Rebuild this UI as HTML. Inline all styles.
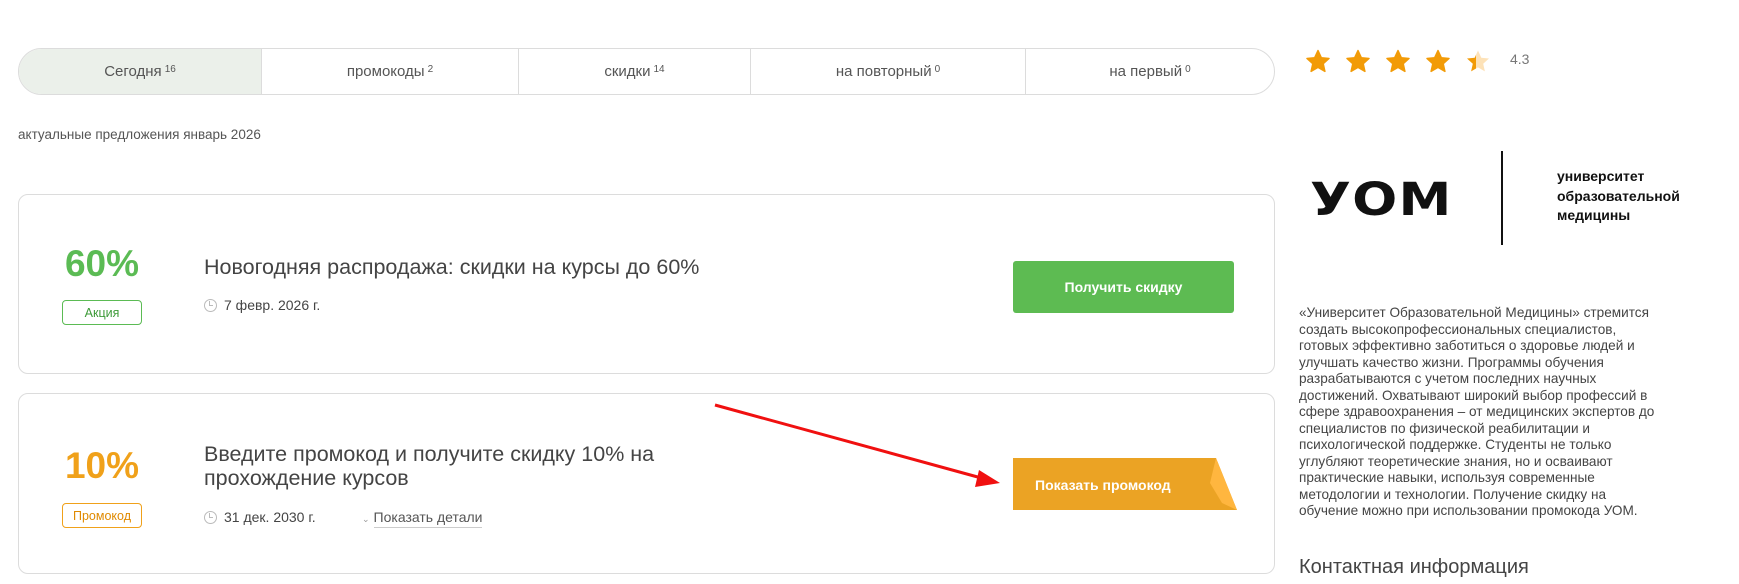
<!DOCTYPE html>
<html><head><meta charset="utf-8"><style>
*{margin:0;padding:0;box-sizing:border-box}
body{width:1739px;height:584px;overflow:hidden;background:#fff;font-family:"Liberation Sans",sans-serif;color:#444;position:relative}
.a{position:absolute}
.tabs{left:18px;top:48px;width:1257px;height:47px;border:1px solid #dcdcdc;border-radius:24px;overflow:hidden;display:flex}
.tabs div{height:100%;display:flex;align-items:center;justify-content:center;font-size:15px;color:#555;border-right:1px solid #dcdcdc}
.tabs div:last-child{border-right:none}
.tabs sup{font-size:10px;margin-left:3px;position:relative;top:-2px}
.card{left:18px;width:1257px;border:1px solid #dcdcdc;border-radius:10px}
.pct{font-size:37px;font-weight:bold;width:120px;text-align:center}
.badge{font-size:12.5px;border:1px solid;border-radius:4px;width:80px;height:25px;display:flex;align-items:center;justify-content:center}
.title{font-size:21.5px;color:#444;line-height:28px}
.date{font-size:14px;color:#444;display:flex;align-items:center}
.clock{width:13px;height:13px;border:1.5px solid #bbb;border-radius:50%;margin-right:7px;position:relative}
.clock:after{content:"";position:absolute;left:4px;top:1px;width:3px;height:4px;border-left:1.5px solid #bbb;border-bottom:1.5px solid #bbb}
.btn{color:#fff;font-weight:bold;font-size:14px;display:flex;align-items:center;justify-content:center;border-radius:3px}
</style></head><body>
<div class="a tabs">
<div style="width:243px;background:#ebf0ea">Сегодня<sup>16</sup></div>
<div style="width:257px">промокоды<sup>2</sup></div>
<div style="width:232px">скидки<sup>14</sup></div>
<div style="width:275px">на повторный<sup>0</sup></div>
<div style="flex:1">на первый<sup>0</sup></div>
</div>
<div class="a" style="left:18px;top:127px;font-size:13.5px;color:#555">актуальные предложения январь 2026</div>

<div class="a card" style="top:194px;height:180px"></div>
<div class="a pct" style="left:42px;top:243px;color:#5bbb54">60%</div>
<div class="a badge" style="left:62px;top:300px;border-color:#5bbb54;color:#3d9a38">Акция</div>
<div class="a title" style="left:204px;top:253px">Новогодняя распродажа: скидки на курсы до 60%</div>
<div class="a date" style="left:204px;top:297px"><span class="clock"></span>7 февр. 2026 г.</div>
<div class="a btn" style="left:1013px;top:261px;width:221px;height:52px;background:#5dbb52">Получить скидку</div>

<div class="a card" style="top:393px;height:181px"></div>
<div class="a pct" style="left:42px;top:445px;color:#f0a11a">10%</div>
<div class="a badge" style="left:62px;top:503px;border-color:#f0a11a;color:#e08a00">Промокод</div>
<div class="a title" style="left:204px;top:442px;line-height:24px">Введите промокод и получите скидку 10% на<br>прохождение курсов</div>
<div class="a date" style="left:204px;top:509px"><span class="clock"></span>31 дек. 2030 г.</div>
<div class="a" style="left:362px;top:509px;font-size:14px;color:#555"><span style="font-size:9px;color:#999;margin-right:4px">&#8964;</span><span style="border-bottom:1px solid #ccc;padding-bottom:2px">Показать детали</span></div>
<svg class="a" style="left:1010px;top:455px" width="232" height="60">
<polygon points="3,3 206,3 227,55 3,55" fill="#eba324"/>
<polygon points="206,3 227,55 212,48 200,28" fill="#ffb63f"/>
<text x="25" y="35" fill="#fff" font-family="Liberation Sans" font-weight="bold" font-size="14">Показать промокод</text>
</svg>
<svg class="a" style="left:0;top:0" width="1100" height="584">
<line x1="715" y1="405" x2="985" y2="479" stroke="#f01010" stroke-width="3"/>
<polygon points="1000,483 979,470 975,487" fill="#f01010"/>
</svg>

<svg class="a" style="left:1306px;top:49px" width="200" height="30">
<defs><linearGradient id="h"><stop offset="0.4" stop-color="#f29b07"/><stop offset="0.4" stop-color="#fde2b8"/></linearGradient>
<path id="s" d="M12 1.5l3.3 7.2 7.7.8-5.8 5.2 1.7 7.7L12 18.4 5.1 22.4l1.7-7.7L1 9.5l7.7-.8z" stroke-linejoin="round" stroke-width="1.5"/></defs>
<use href="#s" x="0" fill="#f29b07" stroke="#f29b07"/><use href="#s" x="40" fill="#f29b07" stroke="#f29b07"/><use href="#s" x="80" fill="#f29b07" stroke="#f29b07"/><use href="#s" x="120" fill="#f29b07" stroke="#f29b07"/><use href="#s" x="160" fill="url(#h)"/>
</svg>
<div class="a" style="left:1510px;top:51px;font-size:14px;color:#777">4.3</div>

<div class="a" style="left:1310px;top:175px;font-size:45px;font-weight:900;color:#111;letter-spacing:1px;transform:scaleX(1.18);transform-origin:left;font-family:'DejaVu Sans',sans-serif;line-height:50px">УОМ</div>
<div class="a" style="left:1501px;top:151px;width:2px;height:94px;background:#111"></div>
<div class="a" style="left:1557px;top:167px;font-size:14px;font-weight:bold;color:#111;line-height:19.5px">университет<br>образовательной<br>медицины</div>
<div class="a" style="left:1299px;top:305px;width:362px;font-size:13.6px;line-height:16.5px;color:#444">«Университет Образовательной Медицины» стремится создать высокопрофессиональных специалистов, готовых эффективно заботиться о здоровье людей и улучшать качество жизни. Программы обучения разрабатываются с учетом последних научных достижений. Охватывают широкий выбор профессий в сфере здравоохранения – от медицинских экспертов до специалистов по физической реабилитации и психологической поддержке. Студенты не только углубляют теоретические знания, но и осваивают практические навыки, используя современные методологии и технологии. Получение скидку на обучение можно при использовании промокода УОМ.</div>
<div class="a" style="left:1299px;top:556px;font-size:20px;color:#444">Контактная информация</div>
</body></html>
